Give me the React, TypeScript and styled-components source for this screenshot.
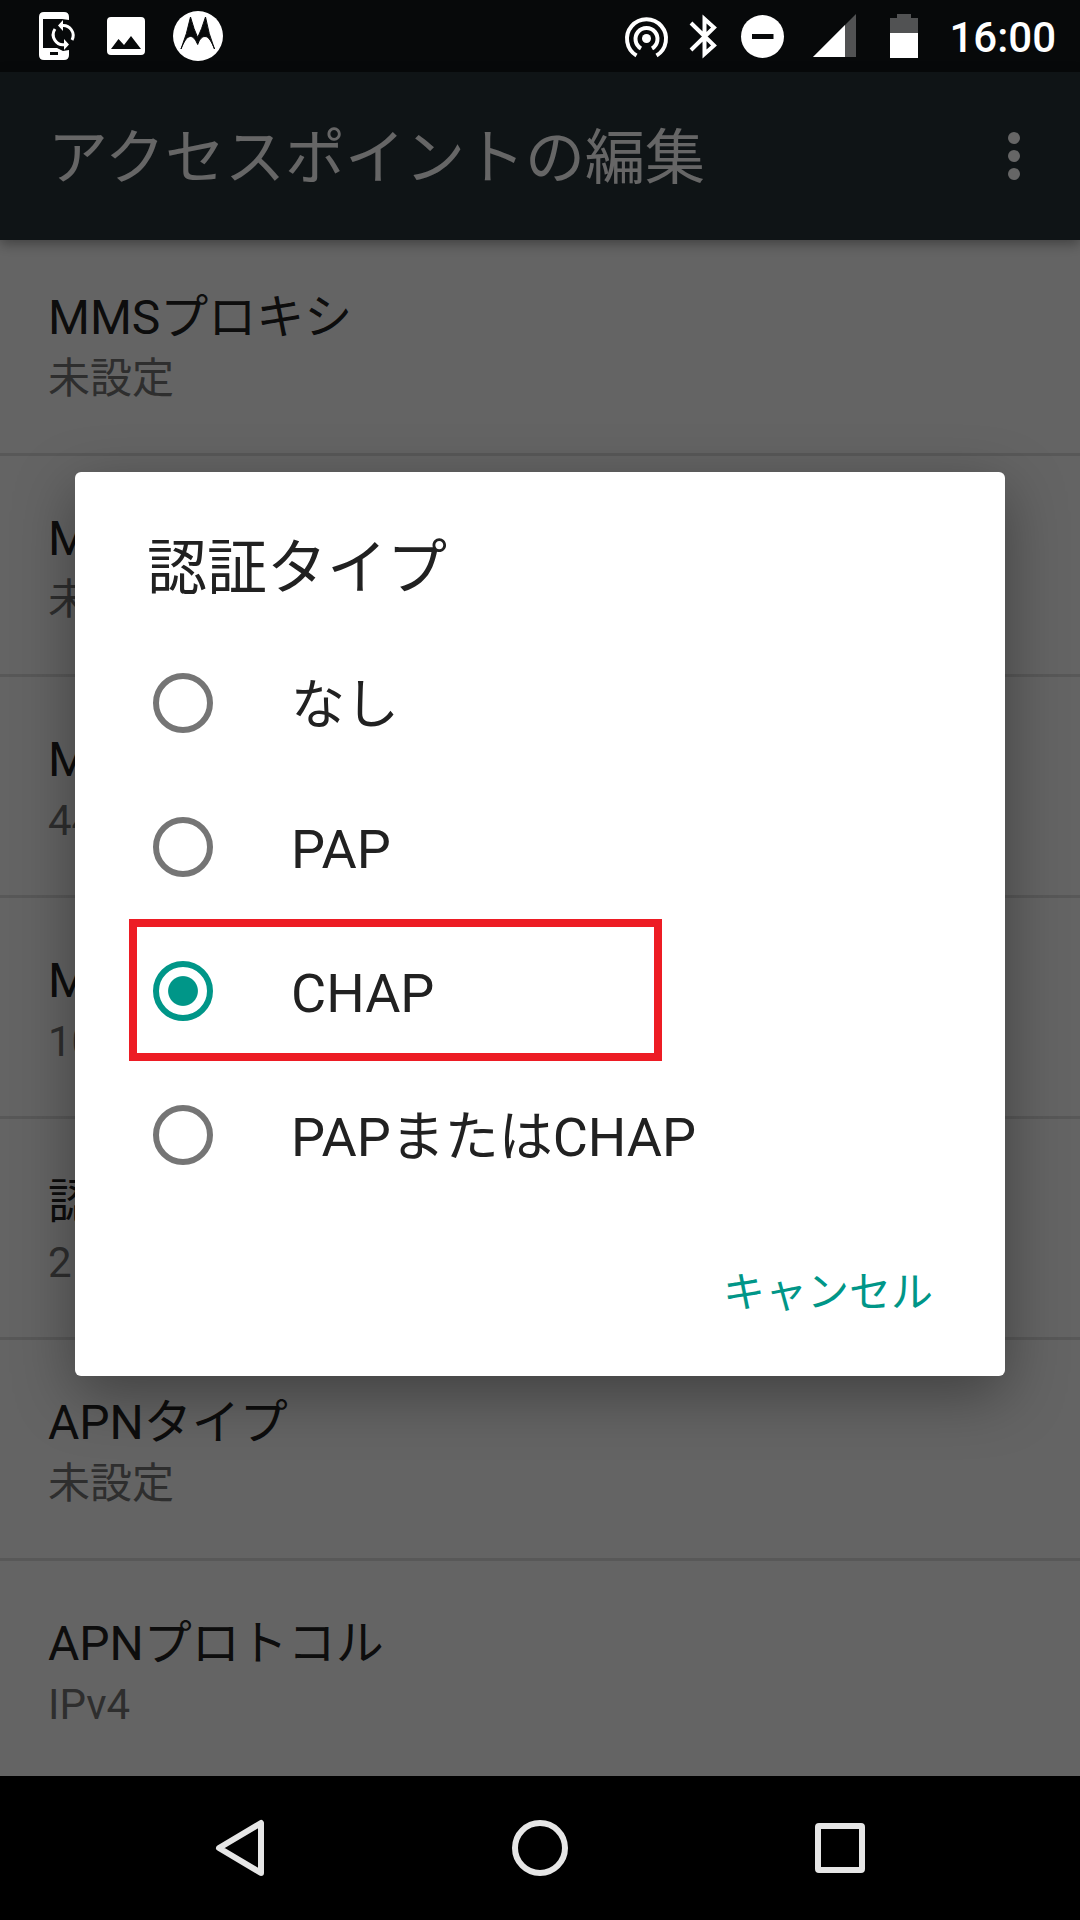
import React, { useState } from "react";
import styled, { createGlobalStyle } from "styled-components";

const GlobalStyle = createGlobalStyle`
  *, *::before, *::after { box-sizing: border-box; }
  body {
    margin: 0;
    background: #000;
    font-family: Roboto, "Noto Sans CJK JP", sans-serif;
  }
  button { font: inherit; border: 0; margin: 0; padding: 0; background: none; cursor: pointer; }
  h1, h2, ul, p { margin: 0; padding: 0; font-weight: 400; }
`;

const Page = styled.div`
  display: flex;
  flex-direction: column;
  min-height: 100vh;
`;

const StatusBar = styled.header`
  display: flex;
  align-items: center;
  justify-content: space-between;
  height: 72px;
  padding: 0 24px 0 36px;
  background: #07090a;
  color: #fff;
`;

const StatusGroup = styled.div<{ $gap: number }>`
  display: flex;
  align-items: center;
  gap: ${(p) => p.$gap}px;
`;

const StatusIcon = styled.svg`
  display: block;
  height: 72px;
  overflow: visible;
  fill: #fff;
`;

const Clock = styled.time`
  padding: 4px 0 0 13px;
  font-size: 42px;
  font-weight: 500;
  line-height: 60px;
`;

const Screen = styled.main`
  position: relative;
  display: flex;
  flex-direction: column;
  flex: 1;
  background: #fafafa;
`;

const AppBar = styled.div`
  display: flex;
  align-items: center;
  justify-content: space-between;
  height: 168px;
  padding: 0 18px 0 48px;
  background: #263238;
  box-shadow: 0 4px 12px rgba(0, 0, 0, 0.35);
  z-index: 1;
`;

const AppTitle = styled.h1`
  padding-top: 5px;
  font-size: 60px;
  line-height: 84px;
  color: #fff;
`;

const MenuButton = styled.button`
  display: flex;
  align-items: center;
  justify-content: center;
  width: 96px;
  height: 144px;
`;

const SettingList = styled.ul`
  list-style: none;
`;

const SettingRow = styled.li`
  padding: 53px 48px 43px;
  border-bottom: 3px solid #dcdcdc;

  &:first-child { padding-top: 48px; }
  &:last-child { padding-bottom: 40px; border-bottom: 0; }
`;

const SettingName = styled.p`
  font-size: 48px;
  line-height: 60px;
  color: #212121;
`;

const SettingValue = styled.p`
  font-size: 42px;
  line-height: 62px;
  color: #737373;
`;

const Scrim = styled.div`
  position: absolute;
  inset: 0;
  z-index: 2;
  background: rgba(0, 0, 0, 0.6);
`;

const DialogLayer = styled.div`
  position: absolute;
  inset: 0;
  z-index: 3;
  display: flex;
  align-items: center;
  justify-content: center;
  padding: 0 75px;
`;

const DialogBox = styled.section`
  flex: 1;
  background: #fff;
  border-radius: 6px;
  box-shadow: 0 18px 60px rgba(0, 0, 0, 0.36);
`;

const DialogTitle = styled.h2`
  padding: 55px 72px 20px;
  font-size: 60px;
  line-height: 84px;
  color: #212121;
`;

const Option = styled.label`
  position: relative;
  display: flex;
  align-items: center;
  gap: 78px;
  height: 144px;
  padding: 0 78px;
  cursor: pointer;
`;

const Radio = styled.input`
  appearance: none;
  flex: none;
  width: 60px;
  height: 60px;
  margin: 0;
  border: 6px solid #757575;
  border-radius: 50%;

  &:checked {
    border-color: #009688;
    background: radial-gradient(circle closest-side, #009688 60%, transparent 64%);
  }
`;

const OptionText = styled.span`
  padding-top: 6px;
  font-size: 54px;
  line-height: 72px;
  color: #212121;
`;

const Marker = styled.span`
  position: absolute;
  top: 0;
  left: 54px;
  width: 533px;
  height: 142px;
  border: 8px solid #ed1c24;
  pointer-events: none;
`;

const Actions = styled.div`
  display: flex;
  justify-content: flex-end;
  padding: 32px 48px 29px;
`;

const CancelButton = styled.button`
  padding: 0 24px;
  font-size: 42px;
  line-height: 108px;
  color: #009688;
`;

const NavBar = styled.nav`
  display: flex;
  justify-content: center;
  height: 144px;
  background: #000;
`;

const NavButton = styled.button`
  display: flex;
  align-items: center;
  justify-content: center;
  width: 300px;
`;

const NavIcon = styled.svg`
  display: block;
  width: 60px;
  height: 60px;
  fill: none;
  stroke: #e6e6e6;
  stroke-width: 6;
  stroke-linejoin: round;
`;

const settings = [
  { name: "MMSプロキシ", value: "未設定" },
  { name: "MMSポート", value: "未設定" },
  { name: "MCC", value: "440" },
  { name: "MNC", value: "10" },
  { name: "認証タイプ", value: "2" },
  { name: "APNタイプ", value: "未設定" },
  { name: "APNプロトコル", value: "IPv4" },
];

const authTypes = ["なし", "PAP", "CHAP", "PAPまたはCHAP"];

function StatusIcons() {
  return (
    <>
      <StatusGroup $gap={24}>
        <StatusIcon viewBox="36 0 42 72" width="42" aria-hidden="true">
          <path d="M44 12H64Q69 12 69 17V20L62 19H43V48H57L63 51L69 50V55Q69 60 64 60H44Q39 60 39 55V17Q39 12 44 12ZM50 52V55H58V52Z" fillRule="evenodd" />
          <path d="M62 25.500A10 10 0 0 1 72 40M65 44.500A10 10 0 0 1 55 29" fill="none" stroke="#fff" strokeWidth="3" />
          <path d="M63 20V31L58 25.500ZM64 39V50L69 44.500Z" />
        </StatusIcon>
        <StatusIcon viewBox="102 0 48 72" width="48" aria-hidden="true">
          <path d="M111 17H141Q145 17 145 21V51Q145 55 141 55H111Q107 55 107 51V21Q107 17 111 17ZM111 49H141L131 36L124 45L118.500 39Z" fillRule="evenodd" />
        </StatusIcon>
        <StatusIcon viewBox="174 0 48 72" width="48" aria-hidden="true">
          <circle cx="198" cy="36" r="25" />
          <path d="M181 49Q187 34 190.500 17Q194 30 197.700 37.500Q201.500 30 205.500 17Q208.500 34 214.500 49C211.500 42 209 36.500 205 36.500C201 36.500 199 41 197.700 44.500C196 41 194 36.500 190.500 36.500C186.500 36.500 184 42 181 49Z" fill="#07090a" stroke="#07090a" strokeWidth="1" />
        </StatusIcon>
      </StatusGroup>
      <StatusGroup $gap={0}>
        <StatusIcon viewBox="618 0 58 72" width="58" aria-hidden="true">
          <circle cx="646.500" cy="38.500" r="4.500" />
          <path d="M641 48.500A11 11 0 1 1 652 48.500M636.500 55.500A19.500 19.500 0 1 1 656.500 55.500" fill="none" stroke="#fff" strokeWidth="4" />
        </StatusIcon>
        <StatusIcon viewBox="676 0 58 72" width="58" aria-hidden="true">
          <path d="M691 23L714 45.500L704.500 54V19L714 27.500L691 50" fill="none" stroke="#fff" strokeWidth="4" />
        </StatusIcon>
        <StatusIcon viewBox="734 0 58 72" width="58" aria-hidden="true">
          <circle cx="762.500" cy="36.500" r="21.500" />
          <path d="M752 34H773.500V39H752Z" fill="#07090a" />
        </StatusIcon>
        <StatusIcon viewBox="792 0 78 72" width="78" aria-hidden="true">
          <path d="M856 14V57H813Z" fill="#515253" />
          <path d="M845 25V57H813Z" />
        </StatusIcon>
        <StatusIcon viewBox="870 0 66 72" width="66" aria-hidden="true">
          <path d="M897 14H911V18H918V34H890V18H897Z" fill="#515253" />
          <path d="M890 33H918V58H890Z" />
        </StatusIcon>
        <Clock>16:00</Clock>
      </StatusGroup>
    </>
  );
}

export default function App() {
  const [selected, setSelected] = useState("CHAP");

  return (
    <>
      <GlobalStyle />
      <Page>
        <StatusBar>
          <StatusIcons />
        </StatusBar>
        <Screen>
          <AppBar>
            <AppTitle>アクセスポイントの編集</AppTitle>
            <MenuButton aria-label="その他のオプション">
              <svg width="12" height="48" viewBox="0 0 12 48" fill="#fff" aria-hidden="true">
                <circle cx="6" cy="6" r="6" />
                <circle cx="6" cy="24" r="6" />
                <circle cx="6" cy="42" r="6" />
              </svg>
            </MenuButton>
          </AppBar>
          <SettingList>
            {settings.map((s) => (
              <SettingRow key={s.name}>
                <SettingName>{s.name}</SettingName>
                <SettingValue>{s.value}</SettingValue>
              </SettingRow>
            ))}
          </SettingList>
          <Scrim />
          <DialogLayer>
            <DialogBox role="dialog" aria-modal="true" aria-labelledby="auth-title">
              <DialogTitle id="auth-title">認証タイプ</DialogTitle>
              {authTypes.map((type) => (
                <Option key={type}>
                  <Radio
                    type="radio"
                    name="auth-type"
                    value={type}
                    checked={selected === type}
                    onChange={() => setSelected(type)}
                  />
                  <OptionText>{type}</OptionText>
                  {type === "CHAP" && <Marker />}
                </Option>
              ))}
              <Actions>
                <CancelButton type="button">キャンセル</CancelButton>
              </Actions>
            </DialogBox>
          </DialogLayer>
        </Screen>
        <NavBar>
          <NavButton aria-label="戻る">
            <NavIcon viewBox="0 0 60 60" aria-hidden="true">
              <path d="M51 5V55L9 30Z" />
            </NavIcon>
          </NavButton>
          <NavButton aria-label="ホーム">
            <NavIcon viewBox="0 0 60 60" aria-hidden="true">
              <circle cx="30" cy="30" r="25" />
            </NavIcon>
          </NavButton>
          <NavButton aria-label="最近使ったアプリ">
            <NavIcon viewBox="0 0 60 60" aria-hidden="true">
              <rect x="8" y="8" width="44" height="44" rx="1" />
            </NavIcon>
          </NavButton>
        </NavBar>
      </Page>
    </>
  );
}
